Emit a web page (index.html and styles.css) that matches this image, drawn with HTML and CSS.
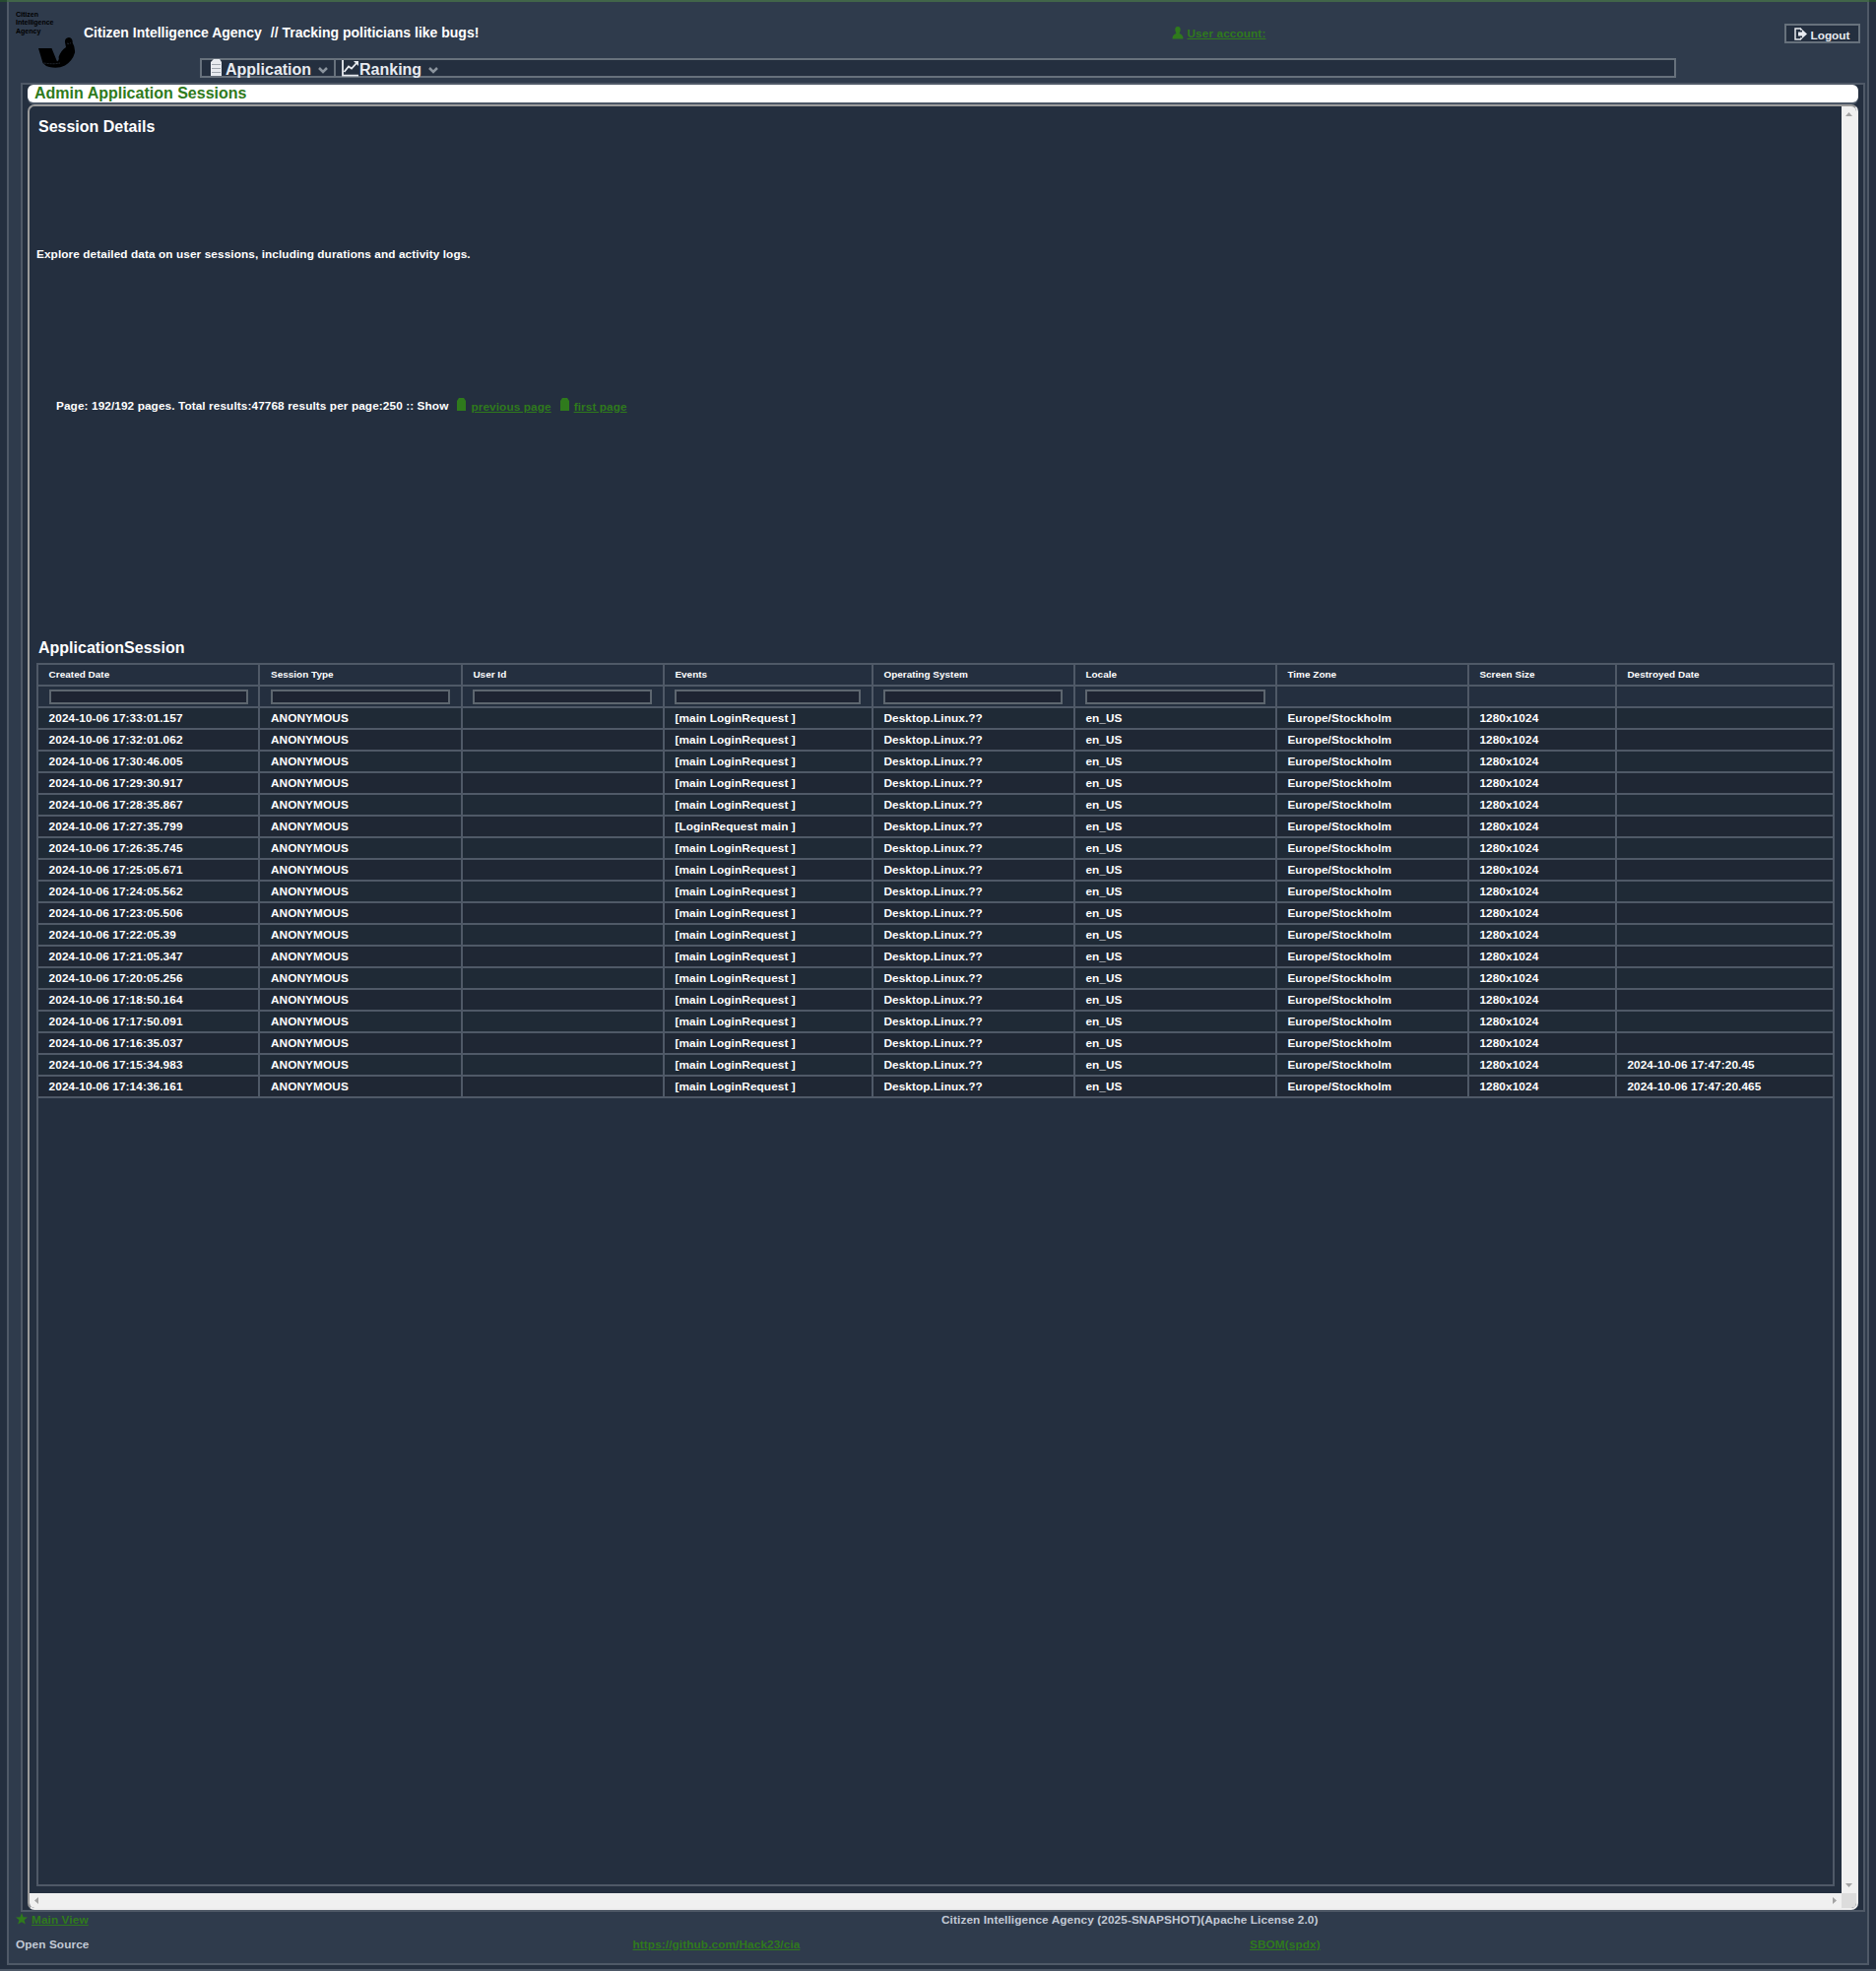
FILE: index.html
```html
<!DOCTYPE html>
<html lang="en">
<head>
<meta charset="utf-8">
<title>Admin Application Sessions</title>
<link rel="stylesheet" href="styles.css">
</head>
<body>
<div class="loading-bar"></div>
<div class="frame">
  <header class="top">
    <svg class="logo" width="62" height="62" viewBox="0 0 62 62">
      <g class="logo-text"><text x="0" y="10">Citizen</text><text x="0" y="18.3">Intelligence</text><text x="0" y="26.6">Agency</text></g>
      <path d="M23 42H36.500L42 55.500Q44.500 54 43.500 51Q46 44 51 41L50 36Q49.500 31.500 54 31Q58 31.500 57.700 36.500Q60.500 41 60 46.500Q57.500 55 50 59.500Q43 63 34 61Q30 60 27.500 57Z"/>
      <path class="logo-line" d="M28.500 57Q38 58.500 45 57M52 37Q54 38 56 36.500"/>
    </svg>
    <div class="top-main">
      <div class="top-row">
        <div class="tagline"><span>Citizen Intelligence Agency</span><span>// Tracking politicians like bugs!</span></div>
        <a class="account"><svg width="12" height="13" viewBox="0 0 12 13"><path d="M6 0C8.300 0 9.200 2 8.500 4.500Q8 6 7.600 7Q11.500 8 11.500 12.500H.5Q.5 8 4.400 7Q4 6 3.500 4.500C2.800 2 3.700 0 6 0Z"/></svg><span>User account:</span></a>
        <button class="logout"><svg width="13" height="13" viewBox="0 0 13 13"><path class="door" d="M7 1H1V12H7M7 1V3M7 12V10"/><path d="M4 4.500H8V2L13 6.500L8 11V8.500H4Z"/></svg><span>Logout</span></button>
      </div>
      <nav class="menu">
        <div class="item item-app"><svg class="ic-app" width="12" height="17" viewBox="0 0 12 17"><path d="M3 0H9L11 3V17H0V3Z"/><path class="slot" d="M1 5.500H10M1 9.500H10M1 13.500H10"/></svg><span>Application</span><svg class="chev" width="10" height="7" viewBox="0 0 10 7"><path d="M1 1L5 5L9 1"/></svg></div>
        <div class="item item-rank"><svg class="ic-rank" width="18" height="17" viewBox="0 0 18 17"><path d="M1 0V15.700H17M2.500 12L7 6.500L10 8.500L16 2"/><path class="tip" d="M12 1H17V6Z"/></svg><span>Ranking</span><svg class="chev" width="10" height="7" viewBox="0 0 10 7"><path d="M1 1L5 5L9 1"/></svg></div>
      </nav>
    </div>
  </header>
  <main class="panel">
    <h1 class="page-title">Admin Application Sessions</h1>
    <div class="scroller">
      <div class="content">
        <h2 class="head-details">Session Details</h2>
        <p class="intro">Explore detailed data on user sessions, including durations and activity logs.</p>
        <div class="pager">
          <span class="summary">Page: 192/192 pages. Total results:47768 results per page:250 :: Show</span>
          <a><svg width="9" height="13" viewBox="0 0 9 13"><path d="M2 0H7L9 3V13H0V3Z"/></svg><span>previous page</span></a>
          <a><svg width="9" height="13" viewBox="0 0 9 13"><path d="M2 0H7L9 3V13H0V3Z"/></svg><span>first page</span></a>
        </div>
        <h2 class="head-table">ApplicationSession</h2>
        <div class="grid">
          <table>
            <colgroup><col class="c1"><col class="c2"><col class="c3"><col class="c4"><col class="c5"><col class="c6"><col class="c7"><col class="c8"><col class="c9"></colgroup>
            <thead>
              <tr><th>Created Date</th><th>Session Type</th><th>User Id</th><th>Events</th><th>Operating System</th><th>Locale</th><th>Time Zone</th><th>Screen Size</th><th>Destroyed Date</th></tr>
              <tr><th><input></th><th><input></th><th><input></th><th><input></th><th><input></th><th><input></th><th></th><th></th><th></th></tr>
            </thead>
            <tbody>
              <tr><td>2024-10-06 17:33:01.157</td><td>ANONYMOUS</td><td></td><td>[main LoginRequest ]</td><td>Desktop.Linux.??</td><td>en_US</td><td>Europe/Stockholm</td><td>1280x1024</td><td></td></tr>
              <tr><td>2024-10-06 17:32:01.062</td><td>ANONYMOUS</td><td></td><td>[main LoginRequest ]</td><td>Desktop.Linux.??</td><td>en_US</td><td>Europe/Stockholm</td><td>1280x1024</td><td></td></tr>
              <tr><td>2024-10-06 17:30:46.005</td><td>ANONYMOUS</td><td></td><td>[main LoginRequest ]</td><td>Desktop.Linux.??</td><td>en_US</td><td>Europe/Stockholm</td><td>1280x1024</td><td></td></tr>
              <tr><td>2024-10-06 17:29:30.917</td><td>ANONYMOUS</td><td></td><td>[main LoginRequest ]</td><td>Desktop.Linux.??</td><td>en_US</td><td>Europe/Stockholm</td><td>1280x1024</td><td></td></tr>
              <tr><td>2024-10-06 17:28:35.867</td><td>ANONYMOUS</td><td></td><td>[main LoginRequest ]</td><td>Desktop.Linux.??</td><td>en_US</td><td>Europe/Stockholm</td><td>1280x1024</td><td></td></tr>
              <tr><td>2024-10-06 17:27:35.799</td><td>ANONYMOUS</td><td></td><td>[LoginRequest main ]</td><td>Desktop.Linux.??</td><td>en_US</td><td>Europe/Stockholm</td><td>1280x1024</td><td></td></tr>
              <tr><td>2024-10-06 17:26:35.745</td><td>ANONYMOUS</td><td></td><td>[main LoginRequest ]</td><td>Desktop.Linux.??</td><td>en_US</td><td>Europe/Stockholm</td><td>1280x1024</td><td></td></tr>
              <tr><td>2024-10-06 17:25:05.671</td><td>ANONYMOUS</td><td></td><td>[main LoginRequest ]</td><td>Desktop.Linux.??</td><td>en_US</td><td>Europe/Stockholm</td><td>1280x1024</td><td></td></tr>
              <tr><td>2024-10-06 17:24:05.562</td><td>ANONYMOUS</td><td></td><td>[main LoginRequest ]</td><td>Desktop.Linux.??</td><td>en_US</td><td>Europe/Stockholm</td><td>1280x1024</td><td></td></tr>
              <tr><td>2024-10-06 17:23:05.506</td><td>ANONYMOUS</td><td></td><td>[main LoginRequest ]</td><td>Desktop.Linux.??</td><td>en_US</td><td>Europe/Stockholm</td><td>1280x1024</td><td></td></tr>
              <tr><td>2024-10-06 17:22:05.39</td><td>ANONYMOUS</td><td></td><td>[main LoginRequest ]</td><td>Desktop.Linux.??</td><td>en_US</td><td>Europe/Stockholm</td><td>1280x1024</td><td></td></tr>
              <tr><td>2024-10-06 17:21:05.347</td><td>ANONYMOUS</td><td></td><td>[main LoginRequest ]</td><td>Desktop.Linux.??</td><td>en_US</td><td>Europe/Stockholm</td><td>1280x1024</td><td></td></tr>
              <tr><td>2024-10-06 17:20:05.256</td><td>ANONYMOUS</td><td></td><td>[main LoginRequest ]</td><td>Desktop.Linux.??</td><td>en_US</td><td>Europe/Stockholm</td><td>1280x1024</td><td></td></tr>
              <tr><td>2024-10-06 17:18:50.164</td><td>ANONYMOUS</td><td></td><td>[main LoginRequest ]</td><td>Desktop.Linux.??</td><td>en_US</td><td>Europe/Stockholm</td><td>1280x1024</td><td></td></tr>
              <tr><td>2024-10-06 17:17:50.091</td><td>ANONYMOUS</td><td></td><td>[main LoginRequest ]</td><td>Desktop.Linux.??</td><td>en_US</td><td>Europe/Stockholm</td><td>1280x1024</td><td></td></tr>
              <tr><td>2024-10-06 17:16:35.037</td><td>ANONYMOUS</td><td></td><td>[main LoginRequest ]</td><td>Desktop.Linux.??</td><td>en_US</td><td>Europe/Stockholm</td><td>1280x1024</td><td></td></tr>
              <tr><td>2024-10-06 17:15:34.983</td><td>ANONYMOUS</td><td></td><td>[main LoginRequest ]</td><td>Desktop.Linux.??</td><td>en_US</td><td>Europe/Stockholm</td><td>1280x1024</td><td>2024-10-06 17:47:20.45</td></tr>
              <tr><td>2024-10-06 17:14:36.161</td><td>ANONYMOUS</td><td></td><td>[main LoginRequest ]</td><td>Desktop.Linux.??</td><td>en_US</td><td>Europe/Stockholm</td><td>1280x1024</td><td>2024-10-06 17:47:20.465</td></tr>
            </tbody>
          </table>
        </div>
      </div>
      <div class="bar bar-v">
        <svg width="7" height="4" viewBox="0 0 7 4"><path d="M0 4L3.500 0L7 4Z"/></svg>
        <svg width="7" height="4" viewBox="0 0 7 4"><path d="M0 0L3.500 4L7 0Z"/></svg>
      </div>
      <div class="bar bar-h">
        <svg width="4" height="7" viewBox="0 0 4 7"><path d="M4 0L0 3.500L4 7Z"/></svg>
        <svg width="4" height="7" viewBox="0 0 4 7"><path d="M0 0L4 3.500L0 7Z"/></svg>
      </div>
      <div class="corner"></div>
    </div>
  </main>
  <footer class="foot">
    <div class="foot-a"><a><svg width="12" height="12" viewBox="0 0 12 12"><path d="M6 0L7.600 4.200L12 4.500L8.600 7.300L9.800 11.600L6 9.200L2.200 11.600L3.400 7.300L0 4.500L4.400 4.200Z"/></svg><span>Main View</span></a><span>Citizen Intelligence Agency (2025-SNAPSHOT)(Apache License 2.0)</span></div>
    <div class="foot-b"><span>Open Source</span><a><span>https://github.com/Hack23/cia</span></a><a><span>SBOM(spdx)</span></a></div>
  </footer>
</div>
</body>
</html>
```
FILE: styles.css
```css
* { box-sizing: border-box; }
html, body { margin: 0; }
body {
  height: 2001px;
  padding: 0 7px;
  background: #242f3f;
  border-bottom: 2px solid #4c5766;
  font: bold 11.800px/16px "Liberation Sans", Arial, sans-serif;
  letter-spacing: .095px;
  color: #fff;
  overflow: hidden;
}
svg { display: block; flex: none; }
h1, h2, p { margin: 0; }
h1, h2 { font-size: 16px; line-height: 20px; letter-spacing: 0; }
a { display: flex; color: #2f7a1c; fill: #2f7a1c; }
a span { text-decoration: underline; }

.loading-bar {
  position: absolute;
  inset: 0 0 auto 0;
  height: 2px;
  background: rgba(45, 120, 30, .4);
}
.frame {
  display: flex;
  flex-direction: column;
  height: 1995px;
  border: 2px solid #4f5967;
  background: #2f3b4c;
}

/* header */
.top { display: flex; height: 82px; }
.logo { margin: 5px 0 0 7px; }
.logo-text { font-size: 7px; letter-spacing: 0; }
.logo-line { fill: none; stroke: #3a4552; stroke-width: .6; stroke-dasharray: 2 1; }
.top-main { flex: 1; margin-left: 7px; }
.top-row { display: flex; height: 57px; padding-right: 7px; }
.tagline {
  display: flex;
  gap: 9px;
  width: 1104.500px;
  padding-top: 22px;
  font-size: 14px;
  line-height: 18px;
  letter-spacing: 0;
}
.account { gap: 4px; padding-top: 24px; }
.account svg { margin-top: 1px; }
.logout {
  display: flex;
  gap: 3.500px;
  width: 77px;
  height: 20px;
  margin: 22px 0 0 auto;
  padding: 2px 0 0 8px;
  border: 2px solid #67717c;
  background: #242f3f;
  color: #e8ebf0;
  fill: #e8ebf0;
  font: inherit;
}
.logout span { line-height: 16px; }
.door { fill: none; stroke: #e8ebf0; stroke-width: 1.500; }
.menu {
  display: flex;
  width: 1499px;
  height: 20px;
  margin-left: 118px;
  border: 2px solid #67717c;
  background: #242f3f;
  color: #e8ebf0;
  fill: #e8ebf0;
  font-size: 16px;
  line-height: 18px;
  letter-spacing: 0;
}
.item { display: flex; height: 16px; }
.item-app { width: 136px; padding-left: 9px; border-right: 2px solid #67717c; }
.item-rank { padding-left: 6px; }
.item span { padding-top: 1px; }
.ic-app { margin: -1px 3px 0 0; }
.slot { fill: none; stroke: #8d959f; stroke-width: .8; }
.ic-rank > path { fill: none; stroke: #e8ebf0; stroke-width: 1.800; }
.ic-rank > .tip { fill: #e8ebf0; stroke: none; }
.chev { margin: 7px 0 0 7px; fill: none; stroke: #8b949e; stroke-width: 2.500; }

/* main panel */
.panel {
  height: 1857px;
  margin: 0 2px 0 12px;
  padding: 0 5px;
  border: 2px solid #4f5967;
  background: #242f3f;
}
.page-title {
  height: 18px;
  padding-left: 7px;
  border-radius: 6px;
  background: #fff;
  color: #2f7a1c;
  line-height: 17px;
  box-shadow: 0 2px 0 #4c5766;
}
.scroller {
  display: grid;
  grid-template: 1fr 15px / 1fr 15px;
  height: 1833px;
  margin-top: 2px;
  border: 2px solid;
  border-color: #9a9a9a #eee #eee #9a9a9a;
  border-radius: 7px;
  overflow: hidden;
}
.content { padding: 0 7px; }
.head-details { height: 136px; padding: 11px 0 0 2px; }
.intro { height: 154px; padding-top: 6px; }
.pager { display: flex; height: 246px; padding: 6px 0 0 20px; }
.summary { margin-right: 9px; }
.pager a { gap: 5px; margin-right: 9px; }
.pager a span { padding-top: 1px; }
.head-table { height: 29px; padding: 4px 0 0 2px; }
.grid { height: 1242px; border: 2px solid #4f5967; }
table { width: 1822px; border-spacing: 0; table-layout: fixed; }
.c1 { width: 225px; } .c2 { width: 206px; } .c3 { width: 205px; }
.c4 { width: 212px; } .c5 { width: 205px; } .c6 { width: 205px; }
.c7 { width: 195px; } .c8 { width: 150px; } .c9 { width: 219px; }
th, td {
  height: 22px;
  padding: 0 11px 0 10.400px;
  border: solid #4f5967;
  border-width: 0 2px 2px 0;
  text-align: left;
  vertical-align: middle;
  line-height: 16px;
  white-space: pre;
}
th { font-size: 9.950px; letter-spacing: .025px; }
th:first-child, td:first-child { padding: 0 10px 0 10.600px; }
th:nth-child(2), td:nth-child(2) { padding-left: 11px; }
th:nth-child(6) { padding-right: 10px; }
th:last-child, td:last-child { border-right: 0; }
tbody tr { background: #1f2a36; }
tbody tr:nth-child(even) { background: #1f2734; }
input {
  display: block;
  width: 100%;
  height: 15px;
  margin: 0;
  padding: 0;
  border: 2px solid #5d666f;
  background: #1e2432;
}

/* scroll bars */
.bar { display: flex; justify-content: space-between; align-items: center; background: #f0f0f0; fill: #a3a3a3; }
.bar-v { flex-direction: column; padding: 6px 0; }
.bar-h { padding: 0 5px; }
.corner { background: #dcdcdc; }

/* footer */
.foot { padding-left: 7px; color: #c3cad6; }
.foot-a, .foot-b { display: grid; height: 25px; }
.foot-a { grid-template-columns: 940px 1fr; }
.foot-b { grid-template-columns: 626.500px 626.500px 1fr; }
.foot-a a { gap: 4px; }
.foot-a svg { margin-top: 1px; }
```
